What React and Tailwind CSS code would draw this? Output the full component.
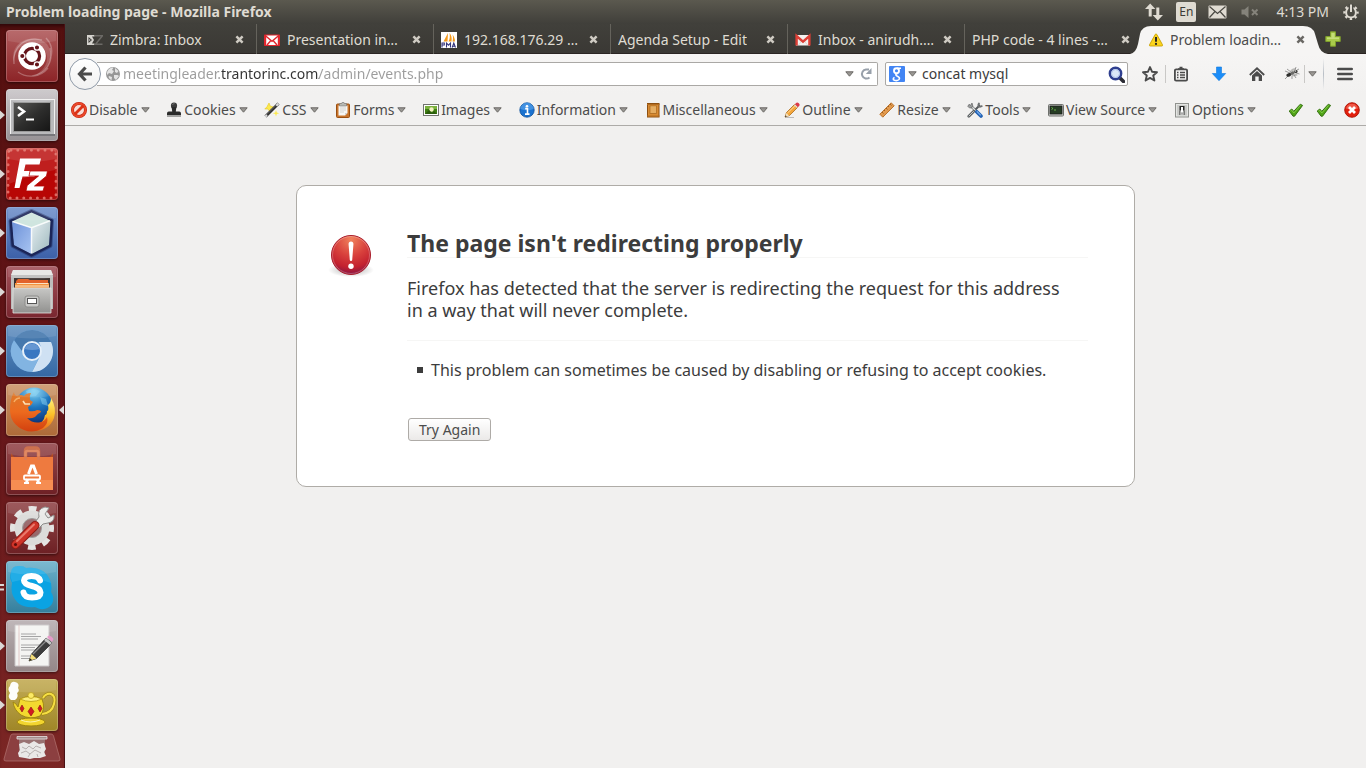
import React from "react";

/* ---------- small shared glyphs ---------- */

const Caret = ({ className = "" }) => (
  <svg viewBox="0 0 9 6" className={`h-[6px] w-[9px] shrink-0 ${className}`} aria-hidden="true">
    <path d="M.8.8h7.4L4.5 5.2z" fill="#9a9894" stroke="#6b6966" strokeWidth="1" strokeLinejoin="round" />
  </svg>
);

const CloseGlyph = ({ color }) => (
  <svg viewBox="0 0 9 9" className="h-[9px] w-[9px]" aria-hidden="true">
    <path d="M1.400 1.400l6.200 6.200M7.600 1.400L1.400 7.600" stroke={color} strokeWidth="2.500" />
  </svg>
);

const Svg16 = ({ children }) => (
  <svg viewBox="0 0 16 16" className="h-4 w-4 shrink-0" aria-hidden="true">{children}</svg>
);

/* ---------- tab icons ---------- */

const ZimbraIcon = () => (
  <Svg16>
    <path d="M0 3h7.500v1.500H5L7 8l-2 3.500h2.500V13H0z" fill="#d5d3ce" />
    <path d="M1.500 5L5 8l-3.500 3z" fill="#3c3b37" />
    <path d="M2.300 7l1.200 1-1.200 1z" fill="#eee" />
    <path d="M7.500 3.700h8L8.500 12.300h7" fill="none" stroke="#6c6a66" strokeWidth="1.500" />
  </Svg16>
);
const GmailIcon = () => (
  <Svg16>
    <path d="M1 3h14v10.500H1z" fill="#f4f1ef" />
    <path d="M3.500 13L7 8.500M12.500 13L9 8.500" stroke="#d8d0cd" strokeWidth=".8" />
    <path d="M1.600 13.500V4L8 9.600 14.400 4v9.500" fill="none" stroke="#dd3f36" strokeWidth="2.400" />
  </Svg16>
);
const GmailRedIcon = () => (
  <Svg16>
    <rect x="0" y="2.500" width="16" height="11.500" rx=".8" fill="#e0262d" />
    <path d="M2.200 3.500h11.600v9.500H2.200z" fill="#fff" />
    <path d="M1.500 3.800L8 9.300l6.500-5.500M3 13l3.500-4M13 13L9.500 9" fill="none" stroke="#e0262d" strokeWidth="1.400" />
  </Svg16>
);
const PmaIcon = () => (
  <Svg16>
    <rect width="16" height="16" fill="#fff" />
    <path d="M7 1L2.500 9.500h4zM8.500 1c2 2 2.500 5 2 8.500H7.500C9 7 9 4 8.500 1zM11.500 2.500c1.500 2 2.500 4 2.500 7h-2.500c.7-2.500.6-5 0-7z" fill="#f59a1b" />
    <path d="M1 15.500v-4.500h2.300v2H1M5.500 15.500V11.200l2 2 2-2v4.300M11.200 15.500l1.600-4.500 1.700 4.500M11.700 14.200h2.500" fill="none" stroke="#33337a" strokeWidth="1.100" />
  </Svg16>
);
const WarnIcon = () => (
  <Svg16>
    <path d="M7.300 2.300L1.500 12.800q-.4 1.200.7 1.200h11.600q1.100 0 .7-1.200L8.700 2.300q-.7-.9-1.400 0z" fill="#fbd41d" stroke="#c9a104" strokeWidth=".9" />
    <path d="M8 5v4.800" stroke="#222" strokeWidth="1.900" />
    <circle cx="8" cy="11.900" r="1.100" fill="#222" />
  </Svg16>
);

/* ---------- developer toolbar icons ---------- */

const DisableIcon = () => (
  <Svg16>
    <circle cx="8" cy="8" r="6.500" fill="#f8ded9" stroke="#c1200c" strokeWidth="3" />
    <circle cx="8" cy="8" r="6.500" fill="none" stroke="#ec4a2c" strokeWidth="1.800" />
    <path d="M3.500 12.500l9-9" stroke="#dc3216" strokeWidth="2.800" />
  </Svg16>
);
const StampIcon = () => (
  <Svg16>
    <circle cx="8" cy="3.700" r="3.100" fill="#3b3b3b" />
    <path d="M5.600 5h4.800l-.6 4.500h3.400q1.800 0 1.800 2v1.500H1v-1.500q0-2 1.800-2h3.400z" fill="#2b2b2b" />
    <path d="M1 13.500h14v1H1z" fill="#555" />
    <path d="M6.500 2.800q.6-1.200 2-1.200" stroke="#888" fill="none" strokeWidth=".8" />
  </Svg16>
);
const WandIcon = () => (
  <Svg16>
    <path d="M5 1l1.300 3.200L9.500 5 6.500 6.500 6 10 4 7 .8 7 3 4.800z" fill="#fce94f" stroke="#e6c61c" strokeWidth=".6" />
    <path d="M12 8l.8 2.500 2.500.8-2.500.8-.8 2.500-.8-2.500-2.500-.8 2.500-.8z" fill="#fce94f" />
    <path d="M1.500 14.500L14.500 1.500" stroke="#2e2e2e" strokeWidth="2.800" />
    <path d="M2 13.300L13.500 1.800" stroke="#888" strokeWidth=".6" />
    <path d="M12.300 3.700l2.200-2.200M1.300 14.700l1.700-1.700" stroke="#ddd" strokeWidth="2" />
  </Svg16>
);
const ClipboardIcon = () => (
  <Svg16>
    <rect x="1.500" y="2" width="13" height="13.500" rx="1" fill="#c8742b" stroke="#9a4f12" />
    <path d="M3.500 3.500h9v7.500l-2.500 2.500H3.500z" fill="#f7f7f5" />
    <path d="M12.500 11H10v2.500z" fill="#cfcfcb" />
    <path d="M5 6h6M5 8h6M5 10h4" stroke="#c9c9c5" strokeWidth=".8" />
    <path d="M4.500 1.500h2l.5-1h2l.5 1h2V4h-7z" fill="#b7b9b4" stroke="#777" strokeWidth=".6" />
  </Svg16>
);
const PictureIcon = () => (
  <Svg16>
    <rect x=".5" y="2.500" width="15" height="11" fill="#fff" stroke="#72746f" />
    <rect x="2" y="4" width="12" height="8" fill="#3f7f13" />
    <path d="M2 4h12v3H2z" fill="#7bb13e" />
    <circle cx="8.500" cy="7.500" r="2.200" fill="#f3f1c0" />
    <path d="M2 12l4-4 3 3 2-2 3 3z" fill="#2b5c0c" />
  </Svg16>
);
const InfoIcon = () => (
  <Svg16>
    <circle cx="8" cy="8" r="7.200" fill="#1b72cf" stroke="#0b4f9b" strokeWidth=".8" />
    <path d="M1.500 7a6.500 6.500 0 0113 0q-6.500 2.500-13 0z" fill="#5ba6ee" opacity=".6" />
    <circle cx="8" cy="4.300" r="1.300" fill="#fff" />
    <path d="M6.200 6.600h2.300V12M6 12.100h4.500" stroke="#fff" strokeWidth="1.600" fill="none" />
  </Svg16>
);
const MiscIcon = () => (
  <Svg16>
    <rect x="2.500" y="1.500" width="11.500" height="13.500" fill="#d98b33" stroke="#8d4f10" />
    <rect x="5" y="4" width="6.500" height="7.500" fill="#f7c981" stroke="#a8661d" strokeWidth=".8" />
    <path d="M5 6h6.500M5 8h6.500M5 10h6.500" stroke="#c98334" strokeWidth=".8" />
    <path d="M2 2.500h12.500M2 14h12.500" stroke="#b26c20" />
  </Svg16>
);
const PencilIcon = () => (
  <Svg16>
    <path d="M1 15.500h9" stroke="#bbb" strokeWidth="1" />
    <path d="M1 15l1.500-4.500L11 2l3 3-8.500 8.500z" fill="#f4a73c" stroke="#a9691a" strokeWidth=".8" />
    <path d="M3.500 11L12 2.800" stroke="#fdd79b" strokeWidth="1" />
    <path d="M1 15l1.300-4 2.700 2.700z" fill="#f4e3c0" />
    <path d="M1 15l.6-1.700 1.100 1.100z" fill="#222" />
    <path d="M10.800 2.200l3 3L15.500 3.500q.5-1.500-.7-2.300-1.200-.9-2.300-.5z" fill="#dc3a4a" />
    <path d="M10.400 2.600l3 3" stroke="#ddd" strokeWidth="1.200" />
  </Svg16>
);
const RulerIcon = () => (
  <Svg16>
    <path d="M.8 12.200L12.200.8l3 3L3.800 15.200z" fill="#e29a4e" stroke="#b36a21" strokeWidth=".9" />
    <path d="M3 10l1.500 1.500M5 8l1 1M7 6l1.500 1.500M9 4l1 1M11 2l1.500 1.500" stroke="#8e5013" strokeWidth=".8" />
  </Svg16>
);
const ToolsIcon = () => (
  <Svg16>
    <path d="M3.500 3.500l9 9" stroke="#777a7a" strokeWidth="2.600" />
    <path d="M3.500 3.500l9 9" stroke="#e4e6e6" strokeWidth="1.100" />
    <path d="M.8 4.300Q2 6.600 4.600 6 6.600 4 5 1L3.600 3.300 2 2.300z" fill="#9a9d9d" stroke="#555" strokeWidth=".6" />
    <path d="M8.500 7.500L13 3" stroke="#55585a" strokeWidth="2" />
    <path d="M1.800 14.200L6.800 9.200" stroke="#5d6163" strokeWidth="2.800" strokeLinecap="round" />
    <path d="M2 14L6.500 9.500" stroke="#c9cccc" strokeWidth="1" strokeLinecap="round" />
    <path d="M9.700 9.700l4.300 4.300" stroke="#2463b4" strokeWidth="3.600" strokeLinecap="round" />
    <path d="M9.800 9.400l4 4" stroke="#79aff0" strokeWidth="1.200" />
    <path d="M12.500 1q-1.800 1.500-.8 3.500 1.700 1 3.700-.8" stroke="#6e7172" fill="none" strokeWidth="1.700" />
  </Svg16>
);
const SourceIcon = () => (
  <Svg16>
    <rect x=".5" y="2.500" width="15" height="11.500" rx="1" fill="#cfd0cd" stroke="#6f716d" />
    <rect x="2" y="4" width="12" height="8" fill="#263b24" stroke="#1a1a1a" strokeWidth=".8" />
    <path d="M3.500 5.500L5 6.500 3.500 7.500M6 8h2" stroke="#6fc04e" strokeWidth=".9" fill="none" />
  </Svg16>
);
const OptionsIcon = () => (
  <Svg16>
    <rect x="1.500" y="1.500" width="13" height="13.500" fill="#e4e5e3" stroke="#90928e" />
    <path d="M3 3h10v10.500H3z" fill="#c9cac7" />
    <path d="M5.500 4h5v4.500h-5z" fill="#222" />
    <rect x="7" y="5" width="2" height="5.500" fill="#fff" />
    <path d="M5.800 8.500v4.500M10.200 8.500v4.500" stroke="#555" strokeWidth="1" />
    <path d="M6.500 10.500h3v2h-3z" fill="#aaa" />
  </Svg16>
);
const CheckIcon = () => (
  <Svg16>
    <path d="M1.200 9l2.600-2 2 2.300L12.300 2.200l2.300 1.200L6.600 14.200H5z" fill="#51a318" stroke="#2e6b0a" strokeWidth=".9" strokeLinejoin="round" />
    <path d="M2.500 9l1.200-.8L5.800 11 12.500 3.400" fill="none" stroke="#8ad44e" strokeWidth=".8" />
  </Svg16>
);
const ErrorIcon = () => (
  <Svg16>
    <circle cx="8" cy="8" r="7.300" fill="#e2200e" stroke="#ac1205" strokeWidth=".9" />
    <path d="M2 6.500a6.200 6.200 0 0112 0Q8 8.500 2 6.500z" fill="#f98072" opacity=".6" />
    <path d="M5 5l6 6M11 5l-6 6" stroke="#fff" strokeWidth="2.800" />
  </Svg16>
);

/* ---------- launcher drawings, each on a 52 x 52 grid ---------- */

const DashArt = () => (
  <>
    <g fill="none" stroke="#fff" opacity=".28" strokeWidth="1.300">
      <path d="M8 34C6 16 20 6 36 10M44 18c4 14-4 26-18 28M12 42c8 6 22 6 30-4M40 8c6 6 7 14 4 22" />
    </g>
    <path d="M8 32C4 18 16 6 32 9q10 2 13 14c1 12-8 22-18 23 10-4 15-12 14-20C39 15 28 11 20 14 12 17 8 24 8 32z" fill="#fff" opacity=".17" />
    <circle cx="26" cy="26" r="13.800" fill="#fff" />
    <circle cx="26" cy="26" r="7.600" fill="none" stroke="#64141a" strokeWidth="3.200" />
    <g fill="#64141a" stroke="#fff" strokeWidth="1.300">
      <circle cx="16.300" cy="26" r="2.700" />
      <circle cx="31" cy="17.500" r="2.700" />
      <circle cx="31" cy="34.500" r="2.700" />
    </g>
  </>
);
const TerminalArt = () => (
  <>
    <defs>
      <linearGradient id="term" x1="0" y1="0" x2="1" y2="1">
        <stop offset="0" stopColor="#585856" /><stop offset=".5" stopColor="#2e2e2d" /><stop offset="1" stopColor="#151515" />
      </linearGradient>
    </defs>
    <rect x="4.500" y="10.500" width="44" height="35" fill="#b9b9bb" stroke="#f1f1f1" />
    <rect x="4" y="45" width="45" height="2" fill="#77767a" />
    <rect x="7.500" y="13.500" width="37" height="29" fill="url(#term)" stroke="#9a9a9a" />
    <path d="M12 18l6 4.500-6 4.500" stroke="#fff" strokeWidth="2.600" fill="none" />
    <path d="M20 30.500h8" stroke="#fff" strokeWidth="2.200" />
  </>
);
const FilezillaArt = () => (
  <>
    <rect x="2.500" y="2.500" width="47" height="47" rx="3" fill="#b80605" />
    <rect x="2" y="2" width="48" height="48" rx="3" fill="none" stroke="#dd6a62" strokeWidth="3" strokeDasharray="0 6.800" strokeLinecap="round" />
    <path d="M3 3h46v19Q26 26 3 36z" fill="#fff" opacity=".1" />
    <path d="M14 10.500h21l-1.500 6H19.500l-1.500 6.500h12l-1.500 5.500H16.500L13.500 40H8.500z" fill="#fff" />
    <path d="M24 23h17.500l-1 5L28.500 38h10l-1.500 5H20l1.200-5.500L32.500 28H23z" fill="#fff" stroke="#b80605" strokeWidth=".8" />
  </>
);
const CubeArt = () => (
  <>
    <defs>
      <linearGradient id="cubeL" x1="0" y1="0" x2="1" y2="1"><stop offset="0" stopColor="#6d91d8" /><stop offset="1" stopColor="#a9c5f2" /></linearGradient>
      <linearGradient id="cubeR" x1="0" y1="0" x2="1" y2="1"><stop offset="0" stopColor="#e5eef1" /><stop offset="1" stopColor="#9eb8bd" /></linearGradient>
    </defs>
    <path d="M25.500 4.500L45.500 13.500l-1.500 25-18.500 9.500L7 38.500 5 14z" fill="none" stroke="#1b2558" strokeWidth="5" strokeLinejoin="round" opacity=".45" />
    <path d="M25.500 4.500L45.500 13.500l-1.500 25-18.500 9.500L7 38.500 5 14z" fill="#d7e9e6" stroke="#1b2558" strokeWidth="3" strokeLinejoin="round" />
    <path d="M25.500 5.500L44.500 14l-19 7-19.500-6.500z" fill="#cfe5df" />
    <path d="M6 14.500l19.500 6.500v26L8 38z" fill="url(#cubeL)" />
    <path d="M44.500 14L25.500 21v26L43 38z" fill="url(#cubeR)" />
    <path d="M6.500 14.500l19 6.300L44 13.700M25.500 21v25" stroke="#fff" strokeWidth="1.500" fill="none" opacity=".85" />
  </>
);
const FilesArt = () => (
  <>
    <defs>
      <linearGradient id="drawer" x1="0" y1="0" x2="0" y2="1"><stop offset="0" stopColor="#c7c7c5" /><stop offset="1" stopColor="#91918f" /></linearGradient>
    </defs>
    <path d="M7 4h38l2 6v33H5V10z" fill="#bdbdbb" />
    <path d="M7 4h38l2 5H5z" fill="#e6e6e4" />
    <rect x="8" y="12" width="36" height="11" fill="#3d3330" />
    <path d="M10 15l2-2h10l2 1h18v9H10z" fill="#e2622a" />
    <path d="M9 17h34v6H9z" fill="#f3923d" />
    <path d="M11 17.500h31M9 20h34" stroke="#fbe3c4" strokeWidth="1" />
    <path d="M7 22h38v25H7z" fill="url(#drawer)" stroke="#e4e4e2" strokeWidth=".8" />
    <rect x="19" y="30" width="14" height="11" rx="2" fill="#c9c9c7" stroke="#8c8c8a" />
    <rect x="21.500" y="32.500" width="9" height="5" fill="#fff" stroke="#555" />
  </>
);
const ChromiumArt = () => (
  <>
    <circle cx="26" cy="26" r="21" fill="#5d99d2" />
    <path d="M7.500 16A21 21 0 0145 17H26a9 9 0 00-8.500 11z" fill="#4578ad" />
    <path d="M45 17A21 21 0 0126 47L34 31q3-6-1-14z" fill="#cfe1f3" />
    <path d="M8 15a21 21 0 0018 32l7.500-15Q24 38 18 29z" fill="#82b4e2" />
    <circle cx="26" cy="26" r="9" fill="#3977c1" stroke="#e6f0f9" strokeWidth="2" />
    <path d="M18.500 24a8 8 0 0115 0q-7 2-15 0z" fill="#83aedd" opacity=".6" />
  </>
);
const FirefoxArt = () => (
  <>
    <defs>
      <radialGradient id="globe" cx=".5" cy=".1" r=".9"><stop offset="0" stopColor="#7fd4f5" /><stop offset=".5" stopColor="#1b74bd" /><stop offset="1" stopColor="#0d2f74" /></radialGradient>
      <linearGradient id="fox" x1="0" y1="0" x2="0" y2="1"><stop offset="0" stopColor="#dd7a2a" /><stop offset=".5" stopColor="#ec6a1e" /><stop offset="1" stopColor="#d2400f" /></linearGradient>
      <linearGradient id="tail" x1="0" y1="0" x2="0" y2="1"><stop offset="0" stopColor="#fff27a" /><stop offset=".5" stopColor="#fbc02a" /><stop offset="1" stopColor="#ea6a1a" /></linearGradient>
    </defs>
    <circle cx="28" cy="22" r="18.500" fill="url(#globe)" />
    <path d="M20 7q7-4 14 0l-4 5-8 1zM34 13l6 2 2 7-6-2z" fill="#8ad2f2" opacity=".5" />
    <path d="M45 14q6 10 3 20-5 13-21 13-14 0-18-9 10 6 20 4 9-3 10-11 2 0 2-4 2 0 1-6 3-2 3-7z" fill="url(#tail)" />
    <path d="M8 8q0 3 3 4 4-2 7 0 2-3 7-3-2 3-1 7l3 2q-1 3-5 5l1 4q5 1 8-1 4 0 4 2-4 2-6 5-4 2-8 1 6 6 14 4 4-1 6-5 2 6-4 11-10 6-19 2Q4 40 4 26 4 15 8 8z" fill="url(#fox)" />
    <path d="M17 17l2 3 5 0" stroke="#fbe0b4" strokeWidth="1.600" fill="none" />
    <path d="M8 18q2-4 6-4" stroke="#f6ad62" strokeWidth="1.500" fill="none" />
  </>
);
const SoftwareArt = () => (
  <>
    <path d="M19.500 16V8q0-3 3-3h7q3 0 3 3v8" fill="none" stroke="#c8613a" strokeWidth="3.500" />
    <path d="M5 10l3 4h36l3-4v9H5z" fill="#b04a23" />
    <path d="M5 14h42v33H5z" fill="#ee7a3f" />
    <path d="M5 37h42v10H5z" fill="#f68d52" />
    <path d="M19.500 17V10q0-2 2-2h9q2 0 2 2v7" fill="none" stroke="#dd7c52" strokeWidth="2.500" />
    <g fill="none" stroke="#fff" strokeWidth="3">
      <path d="M20.500 40l1-4M22.500 31l3-8h2l3 8M31.500 36l1 4" />
      <path d="M18 40h5M30 40h5" strokeWidth="2" />
      <rect x="18" y="32.500" width="16" height="4" rx="1" strokeWidth="1.800" />
    </g>
  </>
);
const SettingsArt = () => (
  <>
    <circle cx="26" cy="26" r="18.500" fill="none" stroke="#e4e4e2" strokeWidth="7" strokeDasharray="7.500 7.030" strokeDashoffset="3.750" />
    <circle cx="26" cy="26" r="13.500" fill="#b3a2a3" fillOpacity=".5" stroke="#dcdcda" strokeWidth="8" />
    <circle cx="26" cy="26" r="9.500" fill="none" stroke="#9d9d9b" strokeWidth="1" />
    <path d="M27 23l6-8q-2-8 6-10l4 1-4 6 3 4 6-3q1 7-6 8l-5 1-6 6z" fill="#eaeae8" stroke="#8b8b89" />
    <path d="M9.500 42.500L29 23.500" stroke="#8d1a14" strokeWidth="9" strokeLinecap="round" />
    <path d="M9.500 42.500L29 23.500" stroke="#cf3429" strokeWidth="7" strokeLinecap="round" />
    <path d="M11 39L28 22.500" stroke="#ea7a6c" strokeWidth="2" strokeLinecap="round" />
    <circle cx="9.500" cy="42.500" r="1.500" fill="#5c0d0a" />
  </>
);
const SkypeArt = () => (
  <>
    <path d="M5 11Q6 4 14 5q4 0 6 2 20-2 25 15 1 5 0 9 4 6 1 12-4 6-12 5-3-1-5-2-18 2-23-14-1-6 0-10-3-5-1-11z" fill="#0aa3e3" />
    <path d="M5 11Q6 4 14 5q4 0 6 2 20-2 25 15-20-7-39-1-2-5-1-10z" fill="#5cc6f0" opacity=".3" />
    <path d="M34 19.500q-1.500-4.500-8.500-4.500t-7.500 4.500q0 3.500 8 5.500t8.500 6.500q0 5-8.500 5-7.500 0-8.500-5" fill="none" stroke="#fff" strokeWidth="6" strokeLinecap="round" />
  </>
);
const EditorArt = () => (
  <>
    <path d="M9 5h34v41H9z" fill="#f4f4f2" stroke="#c9c5c6" />
    <path d="M13 5v41" stroke="#d9b4b4" strokeWidth=".7" />
    <path d="M15 14h15M15 16.500h20M15 19h17M15 25h20M15 27.500h14M15 30h16M15 36h11M15 38.500h9" stroke="#9c9c9c" strokeWidth=".9" />
    <path d="M23 41l2.500-7L40 18l6 5-15.500 15.500z" fill="#3c3c3c" stroke="#222" strokeWidth=".7" />
    <path d="M27 34l14-14" stroke="#8b8b8b" strokeWidth="1.300" />
    <path d="M40 18l6 5-2 2-6-5z" fill="#c9c9c9" />
    <path d="M41 17l2-1.500q3 .5 4.500 3.500L46 22z" fill="#e79ac9" />
    <path d="M23 41l2.500-7 5 4.500z" fill="#f3dd7a" />
    <path d="M23 41l1-2.800 2 1.700z" fill="#222" />
  </>
);
const TeapotArt = () => (
  <>
    <path d="M5 21q-4-3-1-7-3-4 0-7 1-5 5-4 5 1 3 6 2 3-1 5 2 4-2 7z" fill="#fdfdfb" />
    <path d="M37 19q3-5 8-4 5 2 3 10-2 9-12 10" fill="none" stroke="#9d8410" strokeWidth="3.300" />
    <path d="M37 19q3-5 8-4 5 2 3 10-2 9-12 10" fill="none" stroke="#f5de43" strokeWidth="2" />
    <ellipse cx="25" cy="43" rx="14" ry="4" fill="#f2d52f" stroke="#9d8410" />
    <path d="M7 23q3 1 5 5l2-8q11-5 22 0 4 10-2 17-10 4-19-1Q8 31 7 23z" fill="#f3d92f" stroke="#9d8410" strokeWidth=".9" />
    <path d="M14 20q11-5 22 0-11 5-22 0z" fill="#fbee7c" stroke="#b99c14" strokeWidth=".8" />
    <circle cx="25" cy="16.500" r="3" fill="#fbea66" stroke="#b99c14" strokeWidth=".7" />
    <path d="M16 26l2 3.500-2 3.500-2-3.500zM25 28l3 4.500-3 4.500-3-4.500zM34 26l2 3.500-2 3.500-2-3.500z" fill="#d21c24" stroke="#8a0d12" strokeWidth=".6" />
    <path d="M15 41q9 4 19 0" stroke="#fdf6b0" fill="none" />
  </>
);

const apps = [
  { name: "Dash home", tile: "from-[#b0595b] to-[#8c2327]", Art: DashArt },
  { name: "Terminal", tile: "from-[#c9c5c8] to-[#979295]", Art: TerminalArt, left: 1 },
  { name: "FileZilla", tile: "from-[#cf4440] to-[#a90b0a]", Art: FilezillaArt, left: 1 },
  { name: "NetBeans", tile: "from-[#7191cb] to-[#3c60a8]", Art: CubeArt, left: 1 },
  { name: "Files", tile: "from-[#a3525b] to-[#79262f]", Art: FilesArt, left: 1 },
  { name: "Chromium", tile: "from-[#6592c2] to-[#3468a3]", Art: ChromiumArt, left: 1 },
  { name: "Firefox", tile: "from-[#cd976b] to-[#ad6a38]", Art: FirefoxArt, left: 1, active: true },
  { name: "Software Center", tile: "from-[#96494d] to-[#6e2025]", Art: SoftwareArt },
  { name: "System Settings", tile: "from-[#92484b] to-[#6d2024]", Art: SettingsArt },
  { name: "Skype", tile: "from-[#6db2cb] to-[#347f9d]", Art: SkypeArt, left: 2 },
  { name: "Text Editor", tile: "from-[#b8afb1] to-[#948788]", Art: EditorArt, left: 1 },
  { name: "Teapot", tile: "from-[#c3ac55] to-[#9f8626]", Art: TeapotArt, left: 1 },
];

function Launcher() {
  return (
    <nav aria-label="Launcher" className="flex w-[65px] shrink-0 flex-col gap-[7px] border-r border-[#4a1014] bg-linear-to-b from-[#55100f] via-[#641519] to-[#7b2624] pt-[6px] shadow-[inset_0_5px_4px_-3px_#2a0608]">
      {apps.map(({ name, tile, Art, left, active }) => (
        <div key={name} className="flex items-center">
          <svg viewBox="0 0 6 10" className="h-[10px] w-[6px] shrink-0" aria-hidden="true">
            {left === 1 && <path d="M0 .5L5 5 0 9.500z" fill="#dcd8d6" />}
            {left === 2 && <path d="M0 2h4v2H0zM0 6.500h4v2H0z" fill="#dcd8d6" />}
          </svg>
          <button type="button" aria-label={name} className={`h-[52px] w-[52px] overflow-hidden rounded-[4px] bg-linear-to-b shadow-[inset_0_0_0_1px_rgba(255,255,255,0.22),0_1px_3px_rgba(0,0,0,0.5)] ${tile}`}>
            <svg viewBox="0 0 52 52" className="h-full w-full" aria-hidden="true">
              <Art />
              <path d="M2 1h48v10Q26 16 2 11z" fill="#fff" opacity=".1" />
            </svg>
          </button>
          {active && (
            <svg viewBox="0 0 6 10" className="h-[10px] w-[6px] shrink-0" aria-hidden="true">
              <path d="M6 .5L1 5l5 4.500z" fill="#dcd8d6" />
            </svg>
          )}
        </div>
      ))}
      <button type="button" aria-label="Trash" className="-mt-[6px] h-[32px] w-[64px]">
        <svg viewBox="0 0 64 32" className="h-full w-full" aria-hidden="true">
          <path d="M13 2h38q2 0 2.500 2L60 27q.5 2-2 2H6q-2.500 0-2-2l6.500-23Q11 2 13 2z" fill="#8c3f40" stroke="#ad6c6a" strokeWidth=".8" />
          <path d="M19 7h26v17q-13 4-26 0z" fill="#9b7f7e" opacity=".8" />
          <path d="M19 12l5-2 5 2 5-3 5 3 5-1 2 6-2 3 2 4-6 2-6 0-4 1-5-1-6-1-1-4 2-3z" fill="#e9e8e7" />
          <path d="M22 15l4 2 3-3 4 3 3-3 5 2M21 21l5-2 4 3 5-4 6 3M28 25l2-3M38 25l-1-3" fill="none" stroke="#b1aaa9" strokeWidth=".9" />
          <path d="M17 4.500h30v2.500H17z" fill="#a58e8d" stroke="#e9e4e3" strokeWidth=".8" />
        </svg>
      </button>
    </nav>
  );
}

/* ---------- desktop panel ---------- */

function TopPanel() {
  return (
    <header className="flex h-6 items-center bg-linear-to-b from-[#5b594f] to-[#403f3a] pr-[7px] pl-[6px] text-[#dfdbd2]">
      <h2 className="mr-auto text-[14px] leading-6 font-bold">Problem loading page - Mozilla Firefox</h2>
      <div className="flex h-6 items-center">
        <svg viewBox="0 0 18 18" className="mr-[13px] h-[18px] w-[18px]" aria-label="Network" role="img">
          <path d="M5.200.5L0 6h3.700v7.500h3V6h3.700zM12.800 17.500L18 12h-3.700V4.500h-3V12H7.600z" fill="#dfdbd2" />
        </svg>
        <button type="button" className="mr-[12px] h-5 w-5 rounded-[2px] bg-[#dfdbd2] text-[12px] leading-5 text-[#3c3b37]">En</button>
        <svg viewBox="0 0 19 14" className="mr-[14px] h-[14px] w-[19px]" aria-label="Messages" role="img">
          <rect x=".5" y=".5" width="18" height="13" rx="1" fill="#dfdbd2" />
          <path d="M1.500 1.500l8 7 8-7M1.500 12.500l5.500-6M17.500 12.500L12 6.500" fill="none" stroke="#4a4943" strokeWidth="1.200" />
        </svg>
        <svg viewBox="0 0 18 14" className="mr-[17px] h-[14px] w-[18px]" aria-label="Muted" role="img">
          <path d="M.5 4.500h3L7.500 1v12L3.500 9.500h-3z" fill="#85837b" />
          <path d="M11 4.500l5.500 5.500M16.500 4.500L11 10" stroke="#85837b" strokeWidth="2" />
        </svg>
        <time className="mr-[14px] text-[14px] leading-6">4:13 PM</time>
        <svg viewBox="0 0 16 16" className="h-4 w-4" aria-label="Session" role="img">
          <circle cx="8" cy="8.500" r="4.900" fill="none" stroke="#dfdbd2" strokeWidth="2" />
          <circle cx="8" cy="8.500" r="6.600" fill="none" stroke="#dfdbd2" strokeWidth="2.200" strokeDasharray="2.400 2.780" strokeDashoffset="1.200" />
          <path d="M8 0v8" stroke="#4c4b44" strokeWidth="4.800" />
          <path d="M8 .5v7.500" stroke="#dfdbd2" strokeWidth="2" />
        </svg>
      </div>
    </header>
  );
}

/* ---------- browser ---------- */

const tabs = [
  { label: "Zimbra: Inbox", Icon: ZimbraIcon },
  { label: "Presentation in…", Icon: GmailRedIcon },
  { label: "192.168.176.29 …", Icon: PmaIcon },
  { label: "Agenda Setup - Edit" },
  { label: "Inbox - anirudh.…", Icon: GmailIcon },
  { label: "PHP code - 4 lines -…" },
];

function TabStrip() {
  return (
    <div role="tablist" className="flex h-[30px] bg-linear-to-b from-[#41403b] to-[#3a3834] pl-[15px] text-[14px] text-[#dfdbd2] shadow-[inset_0_-1px_0_#2b2523]">
      {tabs.map(({ label, Icon }, i) => (
        <div key={label} className={`flex w-[177px] min-w-0 items-center gap-[7px] pt-px pr-[12px] pl-[7px] ${i < 5 ? "border-r border-r-[#65635c]" : ""}`}>
          <button type="button" role="tab" aria-selected="false" className="flex min-w-0 flex-1 items-center gap-[7px] text-left">
            {Icon && <Icon />}
            <span className="overflow-hidden whitespace-nowrap">{label}</span>
          </button>
          <button type="button" aria-label={`Close ${label}`}><CloseGlyph color="#cfcbc3" /></button>
        </div>
      ))}
      <div className="relative flex w-[177px] min-w-0 items-center gap-[7px] pt-px pr-[14px] pl-[6px] text-[#4c4c4c]">
        <svg viewBox="0 0 198 30" className="absolute top-0 -left-[12px] h-[30px] w-[198px]" aria-hidden="true">
          <path d="M0 30Q6 29 8 20L10 10Q12 2 21 2H173Q183 2 185 10L188 20Q190 29 198 30z" fill="#f6f5f4" />
        </svg>
        <button type="button" role="tab" aria-selected="true" className="relative flex min-w-0 flex-1 items-center gap-[6px] text-left">
          <WarnIcon />
          <span className="overflow-hidden whitespace-nowrap">Problem loadin…</span>
        </button>
        <button type="button" aria-label="Close Problem loading page" className="relative"><CloseGlyph color="#6a6864" /></button>
      </div>
      <button type="button" aria-label="Open a new tab" className="relative ml-[6px]">
        <svg viewBox="0 0 16 16" className="h-4 w-4" aria-hidden="true">
          <path d="M5.500.8h5v4.700h4.700v5h-4.700v4.700h-5v-4.700H.8v-5h4.700z" fill="#a9cb4b" stroke="#7f9f2b" />
          <path d="M6.500 2h3v4.500H14v1.500H2V6.500h4.500z" fill="#cce283" opacity=".8" />
        </svg>
      </button>
    </div>
  );
}

function NavBar() {
  return (
    <div className="flex h-10 items-center bg-linear-to-b from-[#f6f5f4] to-[#f2f1f0] pl-1">
      <button type="button" aria-label="Back" className="z-10 flex h-8 w-8 shrink-0 items-center justify-center rounded-full border border-[#8f9aa8] bg-linear-to-b from-white to-[#f1f1f1]">
        <svg viewBox="0 0 16 16" className="h-4 w-4" aria-hidden="true">
          <path d="M8.500 1.500L2.500 8l6 6.500M3 8h12" fill="none" stroke="#4b4b4b" strokeWidth="3.200" />
        </svg>
      </button>
      <div className="-ml-1 flex h-6 min-w-0 flex-1 items-center rounded-r-[2px] border border-l-0 border-[#aaa8a5] bg-white pr-[4px] pl-2">
        <svg viewBox="0 0 16 16" className="h-4 w-4 shrink-0" aria-hidden="true">
          <circle cx="8" cy="8" r="7" fill="#979797" />
          <path d="M3.500 3.500q3-2.500 5-1.800L7 4l2 1-2 3-3-1-2 2q-.8-3 1.500-5.500zM10 2l3.500 3L12 7l-2-1zM9 9l3.500 0 1.500 1-3 4-2-2zM4 10l3 1-.5 3.300Q4 13 3.500 11z" fill="#e4e4e4" />
        </svg>
        <input
          aria-label="Address"
          defaultValue="meetingleader.trantorinc.com/admin/events.php"
          className="ml-[2px] min-w-0 flex-1 bg-[linear-gradient(90deg,#9c9c9c_98px,#333_98px,#333_196px,#9c9c9c_196px)] bg-clip-text text-[14px] leading-5 text-transparent outline-none"
        />
        <button type="button" aria-label="Show history" className="mr-[5px]"><Caret /></button>
        <button type="button" aria-label="Reload">
          <svg viewBox="0 0 14 14" className="h-[14px] w-[14px]" aria-hidden="true">
            <path d="M10.500 10.500A4.600 4.600 0 117 2.400h3" fill="none" stroke="#98a0aa" strokeWidth="2" />
            <path d="M12.500 1v6H6.800z" fill="#98a0aa" />
          </svg>
        </button>
      </div>
      <div className="ml-[7px] flex h-6 w-[243px] shrink-0 items-center rounded-[2px] border border-[#aaa8a5] bg-white pr-[2px] pl-[3px]">
        <button type="button" aria-label="Choose search engine" className="flex items-center gap-[3px]">
          <span className="flex h-4 w-4 items-start justify-center rounded-[1px] bg-[#4285f4]">
            <svg viewBox="0 0 16 16" className="h-4 w-4" aria-hidden="true">
              <circle cx="7.500" cy="4.800" r="2.500" fill="none" stroke="#fff" strokeWidth="1.900" />
              <path d="M8 2.200h4M8.500 7.500q-3 1-.5 2.500 3.500 1.500 2 3.500-2 1.800-4.500.8Q3 13 5.500 11.300" fill="none" stroke="#fff" strokeWidth="1.600" />
            </svg>
          </span>
          <Caret />
        </button>
        <input aria-label="Search" defaultValue="concat mysql" className="ml-[5px] min-w-0 flex-1 bg-transparent text-[14px] leading-5 text-[#3c3c3c] outline-none" />
        <button type="button" aria-label="Search">
          <svg viewBox="0 0 17 17" className="h-[17px] w-[17px]" aria-hidden="true">
            <path d="M11 11l4.500 4.500" stroke="#2c2c34" strokeWidth="3.600" strokeLinecap="round" />
            <circle cx="7.500" cy="7.500" r="5.700" fill="#dce8f8" stroke="#2f3f8f" strokeWidth="2.400" />
            <circle cx="7.500" cy="7.500" r="4" fill="none" stroke="#a9bde6" strokeWidth=".9" />
          </svg>
        </button>
      </div>
      <button type="button" aria-label="Bookmark this page" className="ml-[7px] flex w-[30px] justify-center">
        <svg viewBox="0 0 18 18" className="h-[18px] w-[18px]" aria-hidden="true">
          <path d="M9 2l2 4.700 5 .5-3.800 3.300 1.200 5L9 12.900l-4.400 2.600 1.200-5L2 7.200l5-.5z" fill="none" stroke="#4b4b4b" strokeWidth="1.900" strokeLinejoin="round" />
        </svg>
      </button>
      <span className="h-[18px] w-px bg-[#c9c8c6]" />
      <button type="button" aria-label="Show your bookmarks" className="flex w-[30px] justify-center">
        <svg viewBox="0 0 16 16" className="h-4 w-4" aria-hidden="true">
          <rect x="1.900" y="3.400" width="12.200" height="11.200" rx="1.200" fill="none" stroke="#4b4b4b" strokeWidth="1.800" />
          <path d="M5 4V2.300h1.500V.8h3v1.500H11V4z" fill="#4b4b4b" />
          <path d="M4 6.500h1.500M7 6.500h5M4 9h1.500M7 9h5M4 11.500h1.500M7 11.500h5" stroke="#4b4b4b" strokeWidth="1.400" />
        </svg>
      </button>
      <button type="button" aria-label="Downloads" className="ml-1 flex w-[38px] justify-center">
        <svg viewBox="0 0 16 16" className="h-4 w-4" aria-hidden="true">
          <path d="M5.500 1h5v6.500h4.200L8 14.700 1.300 7.500h4.200z" fill="#1b8df8" stroke="#1179dd" strokeWidth=".6" />
        </svg>
      </button>
      <button type="button" aria-label="Home" className="flex w-[38px] justify-center">
        <svg viewBox="0 0 16 16" className="h-4 w-4" aria-hidden="true">
          <path d="M.8 9L8 2.300 15.200 9" fill="none" stroke="#4b4b4b" strokeWidth="1.800" />
          <path d="M3 9.600L8 5l5 4.600V15H9.700v-4.500H6.300V15H3z" fill="#4b4b4b" />
        </svg>
      </button>
      <button type="button" aria-label="Firebug" className="flex w-[28px] justify-center pl-[4px]">
        <svg viewBox="0 0 16 16" className="h-4 w-4" aria-hidden="true">
          <path d="M6 5q2-3 6-3-1 2-4 4zM8 8q4-1 6 1-3 2-6 1z" fill="#b9b9b7" />
          <path d="M1 5l5 2M3 3l4 3M8 10l0 3M10 9l2 3M12 7l3.500 1M11 4l1-3M4 10l-3 3M13 4l2-1" stroke="#777" strokeWidth=".7" />
          <ellipse cx="5" cy="8.800" rx="2.800" ry="1.700" transform="rotate(-20 5 8.800)" fill="#2f2f2d" />
          <ellipse cx="8.500" cy="7" rx="2.200" ry="1.600" transform="rotate(-20 8.500 7)" fill="#6c6c6a" />
          <circle cx="11.800" cy="5.500" r="1.800" fill="#42423f" />
          <circle cx="11.400" cy="5" r=".7" fill="#ddd" />
        </svg>
      </button>
      <span className="h-[18px] w-px bg-[#c9c8c6]" />
      <button type="button" aria-label="Firebug options" className="flex w-[14px] justify-center"><Caret /></button>
      <span className="ml-1 h-8 w-px bg-linear-to-b from-transparent via-[#b9bfc6] to-transparent" />
      <button type="button" aria-label="Open menu" className="flex w-[42px] justify-center">
        <svg viewBox="0 0 16 14" className="h-[14px] w-4" aria-hidden="true">
          <path d="M1.300 2h13.400M1.300 7h13.400M1.300 12h13.400" stroke="#4b4b4b" strokeWidth="2.600" strokeLinecap="round" />
        </svg>
      </button>
    </div>
  );
}

const menus = [
  { label: "Disable", Icon: DisableIcon },
  { label: "Cookies", Icon: StampIcon },
  { label: "CSS", Icon: WandIcon },
  { label: "Forms", Icon: ClipboardIcon },
  { label: "Images", Icon: PictureIcon },
  { label: "Information", Icon: InfoIcon },
  { label: "Miscellaneous", Icon: MiscIcon },
  { label: "Outline", Icon: PencilIcon },
  { label: "Resize", Icon: RulerIcon },
  { label: "Tools", Icon: ToolsIcon },
  { label: "View Source", Icon: SourceIcon },
  { label: "Options", Icon: OptionsIcon },
];

function DeveloperBar() {
  return (
    <div role="toolbar" aria-label="Web Developer" className="flex h-8 items-center border-b border-[#adaba8] bg-[#f2f1f0] px-[6px] text-[14px] text-[#4c4c4c]">
      <div className="flex flex-1 justify-between pr-8">
        {menus.map(({ label, Icon }) => (
          <button key={label} type="button" className="flex shrink-0 items-center gap-[2px] leading-5">
            <Icon />
            <span>{label}</span>
            <Caret className="ml-px" />
          </button>
        ))}
      </div>
      <div className="flex gap-3">
        <button type="button" aria-label="Standards compliance"><CheckIcon /></button>
        <button type="button" aria-label="CSS status"><CheckIcon /></button>
        <button type="button" aria-label="JavaScript errors"><ErrorIcon /></button>
      </div>
    </div>
  );
}

function ErrorPage() {
  return (
    <main className="flex flex-1 items-start justify-center bg-[#f1f0ef] px-4 pt-[59px] text-[#3c3c3c]">
      <section className="flex w-full max-w-[839px] gap-8 rounded-[10px] border border-[#afaca7] bg-white pt-[43px] pr-[46px] pb-[45px] pl-[30px]">
        <svg viewBox="0 0 48 48" className="mt-[2px] h-12 w-12 shrink-0" aria-label="Error" role="img">
          <defs>
            <radialGradient id="alert" cx=".5" cy=".1" r=".95">
              <stop offset="0" stopColor="#f0825c" /><stop offset=".45" stopColor="#d8403c" /><stop offset=".75" stopColor="#c3212f" /><stop offset="1" stopColor="#7a1248" />
            </radialGradient>
            <radialGradient id="alertShade"><stop offset=".5" stopColor="#000" stopOpacity=".16" /><stop offset="1" stopColor="#000" stopOpacity="0" /></radialGradient>
          </defs>
          <ellipse cx="24" cy="39" rx="23" ry="7" fill="url(#alertShade)" />
          <circle cx="24" cy="24" r="19.500" fill="url(#alert)" stroke="#a91c2a" strokeWidth="1" />
          <circle cx="24" cy="24" r="18.500" fill="none" stroke="#fff" strokeOpacity=".25" />
          <path d="M24 10.500q2.600 0 2.400 3L25.200 29q0 1-1.200 1t-1.200-1l-1.200-15.500q-.2-3 2.400-3z" fill="#fff" />
          <circle cx="24" cy="35.300" r="2.700" fill="#fff" />
        </svg>
        <div className="min-w-0 flex-1">
          <h1 className="border-b border-[#f6f6f5] text-[23px] leading-7 font-bold">The page isn't redirecting properly</h1>
          <p className="mt-[19px] border-b border-[#f6f6f5] pr-3 pb-[19px] text-[18px] leading-[22px]">
            Firefox has detected that the server is redirecting the request for this address in a way that will never complete.
          </p>
          <ul className="mt-[18px]">
            <li className="flex items-center gap-2 pl-[10px] text-[16px] leading-[22px]">
              <span className="h-[6px] w-[6px] shrink-0 bg-[#3c3c3c]" />
              This problem can sometimes be caused by disabling or refusing to accept cookies.
            </li>
          </ul>
          <button type="button" className="mt-[37px] ml-px block h-[23px] rounded-[3px] border border-[#aeaba7] bg-linear-to-b from-white to-[#ebe9e8] px-[10px] text-[14px] leading-5 text-[#4c4c4c]">Try Again</button>
        </div>
      </section>
    </main>
  );
}

export default function App() {
  return (
    <div className="flex min-h-screen flex-col font-['Noto_Sans',sans-serif]">
      <TopPanel />
      <div className="flex flex-1">
        <Launcher />
        <div className="flex min-w-0 flex-1 flex-col">
          <TabStrip />
          <NavBar />
          <DeveloperBar />
          <ErrorPage />
        </div>
      </div>
    </div>
  );
}
